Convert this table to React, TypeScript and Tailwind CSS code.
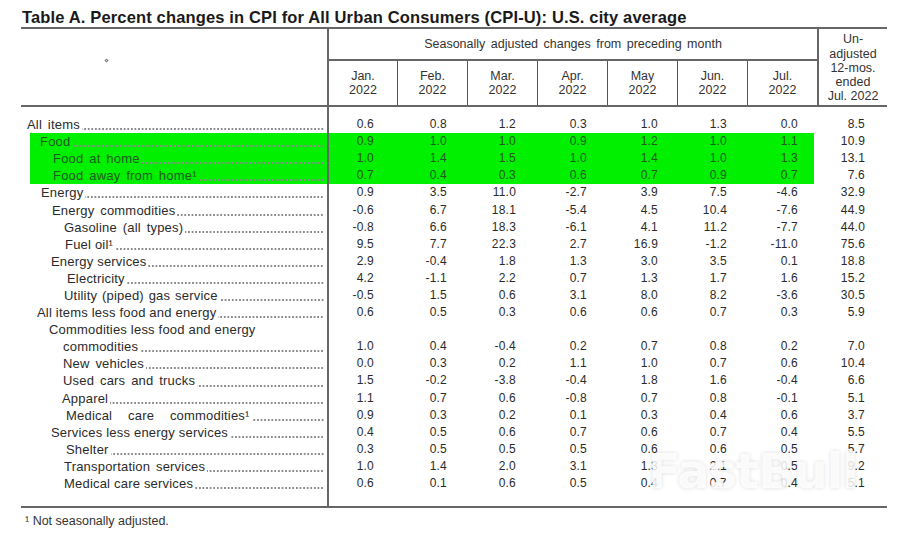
import React from "react";

type Row = {
  label: React.ReactNode;
  pl: string;
  v: string[];
  hl?: boolean;
  pre?: { text: string; pl: string };
  ws?: string;
};

const rows: Row[] = [
  { label: "All items", pl: "pl-[6px]", v: ["0.6", "0.8", "1.2", "0.3", "1.0", "1.3", "0.0", "8.5"], ws: "[word-spacing:2px]" },
  { label: "Food", pl: "pl-[10px]", v: ["0.9", "1.0", "1.0", "0.9", "1.2", "1.0", "1.1", "10.9"], hl: true },
  { label: "Food at home", pl: "pl-[23px]", v: ["1.0", "1.4", "1.5", "1.0", "1.4", "1.0", "1.3", "13.1"], hl: true, ws: "[word-spacing:2px]" },
  { label: "Food away from home\u00b9", pl: "pl-[23px]", v: ["0.7", "0.4", "0.3", "0.6", "0.7", "0.9", "0.7", "7.6"], hl: true, ws: "[word-spacing:2px]" },
  { label: "Energy", pl: "pl-[20px]", v: ["0.9", "3.5", "11.0", "-2.7", "3.9", "7.5", "-4.6", "32.9"] },
  { label: "Energy commodities", pl: "pl-[31px]", v: ["-0.6", "6.7", "18.1", "-5.4", "4.5", "10.4", "-7.6", "44.9"], ws: "[word-spacing:2px]" },
  { label: "Gasoline (all types)", pl: "pl-[43px]", v: ["-0.8", "6.6", "18.3", "-6.1", "4.1", "11.2", "-7.7", "44.0"], ws: "[word-spacing:2px]" },
  { label: "Fuel oil\u00b9", pl: "pl-[44px]", v: ["9.5", "7.7", "22.3", "2.7", "16.9", "-1.2", "-11.0", "75.6"] },
  { label: "Energy services", pl: "pl-[30px]", v: ["2.9", "-0.4", "1.8", "1.3", "3.0", "3.5", "0.1", "18.8"] },
  { label: "Electricity", pl: "pl-[46px]", v: ["4.2", "-1.1", "2.2", "0.7", "1.3", "1.7", "1.6", "15.2"] },
  { label: "Utility (piped) gas service", pl: "pl-[43px]", v: ["-0.5", "1.5", "0.6", "3.1", "8.0", "8.2", "-3.6", "30.5"], ws: "[word-spacing:1px]" },
  { label: "All items less food and energy", pl: "pl-[16px]", v: ["0.6", "0.5", "0.3", "0.6", "0.6", "0.7", "0.3", "5.9"] },
  { label: "commodities", pl: "pl-[42px]", v: ["1.0", "0.4", "-0.4", "0.2", "0.7", "0.8", "0.2", "7.0"], pre: { text: "Commodities less food and energy", pl: "pl-[28px]" } },
  { label: "New vehicles", pl: "pl-[42px]", v: ["0.0", "0.3", "0.2", "1.1", "1.0", "0.7", "0.6", "10.4"], ws: "[word-spacing:2px]" },
  { label: "Used cars and trucks", pl: "pl-[42px]", v: ["1.5", "-0.2", "-3.8", "-0.4", "1.8", "1.6", "-0.4", "6.6"], ws: "[word-spacing:2px]" },
  { label: "Apparel", pl: "pl-[41px]", v: ["1.1", "0.7", "0.6", "-0.8", "0.7", "0.8", "-0.1", "5.1"] },
  { label: "Medical care commodities\u00b9", pl: "pl-[45px]", v: ["0.9", "0.3", "0.2", "0.1", "0.3", "0.4", "0.6", "3.7"], ws: "[word-spacing:12px]" },
  { label: "Services less energy services", pl: "pl-[30px]", v: ["0.4", "0.5", "0.6", "0.7", "0.6", "0.7", "0.4", "5.5"] },
  { label: "Shelter", pl: "pl-[45px]", v: ["0.3", "0.5", "0.5", "0.5", "0.6", "0.6", "0.5", "5.7"] },
  { label: "Transportation services", pl: "pl-[43px]", v: ["1.0", "1.4", "2.0", "3.1", "1.3", "2.1", "0.5", "9.2"], ws: "[word-spacing:2px]" },
  { label: "Medical care services", pl: "pl-[43px]", v: ["0.6", "0.1", "0.6", "0.5", "0.4", "0.7", "0.4", "5.1"] },
];

const months = [
  { m: "Jan.", w: "w-[69px] border-r border-[#555]" },
  { m: "Feb.", w: "w-[70px] border-r border-[#555]" },
  { m: "Mar.", w: "w-[70px] border-r border-[#555]" },
  { m: "Apr.", w: "w-[70px] border-r border-[#555]" },
  { m: "May", w: "w-[70px] border-r border-[#555]" },
  { m: "Jun.", w: "w-[70px] border-r border-[#555]" },
  { m: "Jul.", w: "w-[69px]" },
];

const valCls = [
  "w-[69px] pr-[24px]",
  "w-[70px] pr-[21px]",
  "w-[70px] pr-[22px]",
  "w-[70px] pr-[21px]",
  "w-[70px] pr-[20px]",
  "w-[70px] pr-[21px]",
  "w-[70px] pr-[20px]",
  "w-[69px] pr-[22px]",
];

function Dots() {
  return (
    <span className="flex-1 min-w-0 ml-[2px] self-end mb-[3px] h-[2px] bg-[radial-gradient(circle,#8a8a8a_0.75px,transparent_1px)] bg-[length:3.6px_2px] bg-right bg-repeat-x" />
  );
}

function DataRow({ r }: { r: Row }) {
  const labelInner = (
    <div className={`flex items-center h-full ${r.pl} pr-[3px]`}>
      <span className={`whitespace-nowrap ${r.ws ? r.ws : ""}`}>{r.label}</span>
      <Dots />
    </div>
  );
  return (
    <>
      {r.pre && (
        <div className="flex h-[17.1px]">
          <div className="w-[308px] border-r-2 border-[#666] flex items-center">
            <span className={`${r.pre.pl} whitespace-nowrap`}>{r.pre.text}</span>
          </div>
        </div>
      )}
      <div className={`flex h-[17.1px] ${r.hl ? "text-[#1f5a1f]" : ""}`}>
        <div className="w-[308px] border-r-2 border-[#666]">
          {r.hl ? <div className="ml-[9px] h-full bg-[#00f000]">{labelInner}</div> : labelInner}
        </div>
        <div
          className={`flex items-center text-[12px] ${
            r.hl ? "bg-[linear-gradient(to_right,#00f000_485px,transparent_485px)]" : ""
          }`}
        >
          {r.v.map((x, i) => (
            <div
              key={i}
              className={`${valCls[i]} text-right ${i === 7 ? "text-[#2b2b2b]" : ""}`}
            >
              {x}
            </div>
          ))}
        </div>
      </div>
    </>
  );
}

export default function App() {
  return (
    <div className="relative w-[905px] h-[536px] bg-white text-[#2b2b2b] font-['Liberation_Sans',Arial,sans-serif] overflow-hidden">
      <div className="h-[27px] pt-[8px] pl-[22px] text-[16.5px] leading-[18px] font-bold text-[#1a1a1a] tracking-[0.15px] whitespace-nowrap">
        Table A. Percent changes in CPI for All Urban Consumers (CPI-U): U.S. city average
      </div>
      <div className="ml-[21px] w-[866px]">
        {/* header */}
        <div className="flex h-[80px] border-t-2 border-b-2 border-[#666]">
          <div className="w-[308px] border-r-2 border-[#666] pl-[84px] pt-[30px]">
            <div className="w-[3px] h-[3px] rotate-45 border border-[#777]" />
          </div>
          <div className="w-[490px] border-r-2 border-[#666] flex flex-col">
            <div className="h-[32px] border-b-2 border-[#666] flex items-center justify-center text-[12.5px] [word-spacing:2px] text-[#333]">
              Seasonally adjusted changes from preceding month
            </div>
            <div className="flex flex-1">
              {months.map((m) => (
                <div
                  key={m.m}
                  className={`${m.w} flex flex-col items-center justify-center text-[12.5px] leading-[14px] text-[#333]`}
                >
                  <span>{m.m}</span>
                  <span>2022</span>
                </div>
              ))}
            </div>
          </div>
          <div className="w-[68px] flex flex-col items-center justify-center pt-[2px] text-[12.5px] leading-[14.3px] text-[#333] whitespace-nowrap">
            <span>Un-</span>
            <span>adjusted</span>
            <span>12-mos.</span>
            <span>ended</span>
            <span>Jul. 2022</span>
          </div>
        </div>
        {/* body */}
        <div className="h-[401px] border-b-2 border-[#666] flex flex-col text-[13px] tracking-[0.2px] leading-[17px]">
          <div className="flex h-[9px] shrink-0">
            <div className="w-[308px] border-r-2 border-[#666]" />
          </div>
          {rows.map((r, i) => (
            <DataRow key={i} r={r} />
          ))}
          <div className="flex flex-1">
            <div className="w-[308px] border-r-2 border-[#666]" />
          </div>
        </div>
        <div className="pt-[6px] pl-[4px] text-[12.5px] leading-[14px] text-[#333]">
          {"\u00b9 Not seasonally adjusted."}
        </div>
      </div>
      {/* watermark */}
      <div className="absolute left-[648px] top-[443px] text-[48px] leading-[56px] font-bold text-white/85 [text-shadow:0_0_4px_rgba(0,0,0,0.14)] font-['DejaVu_Sans',sans-serif] tracking-[-1px] pointer-events-none">
        FastBull
      </div>
    </div>
  );
}
